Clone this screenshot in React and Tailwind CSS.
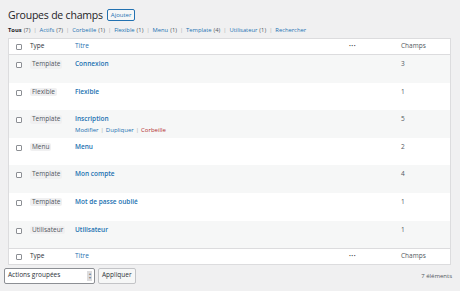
import React from 'react';

const rows = [
  { type: 'Template', title: 'Connexion', count: 3 },
  { type: 'Flexible', title: 'Flexible', count: 1 },
  { type: 'Template', title: 'Inscription', count: 5, actions: true },
  { type: 'Menu', title: 'Menu', count: 2 },
  { type: 'Template', title: 'Mon compte', count: 4 },
  { type: 'Template', title: 'Mot de passe oublié', count: 1 },
  { type: 'Utilisateur', title: 'Utilisateur', count: 1 },
];

const filters = [
  ['Actifs', 7],
  ['Corbeille', 1],
  ['Flexible', 1],
  ['Menu', 1],
  ['Template', 4],
  ['Utilisateur', 1],
];

const Check = () => (
  <span className="block w-[6px] h-[6px] border border-[#8c8f94] bg-white rounded-[1px]" />
);

const HeadRow = ({ top }) => (
  <div className={`flex items-center h-[16px] ${top ? 'border-b' : 'border-t'} border-[#dcdcde] bg-white`}>
    <div className="w-[21px] flex pl-[7px]"><Check /></div>
    <div className="w-[45px] text-[#2c3338]">Type</div>
    <div className="flex-1 text-[#2271b1]">Titre</div>
    <div className="w-[52px] text-[#1d2327] font-bold tracking-[0.5px]">···</div>
    <div className="w-[49px] text-[#50575e]">Champs</div>
  </div>
);

export default function App() {
  return (
    <div className="w-[460px] h-[291px] bg-[#f0f0f1] text-[6.5px] leading-none overflow-hidden" style={{ fontFamily: '"Open Sans", "Noto Sans", sans-serif' }}>
      <div className="flex items-center gap-[4px] pl-[8px] pt-[6px] h-[24px]">
        <h1 className="text-[10.5px] tracking-[-0.2px] text-[#1d2327] font-normal">Groupes de champs</h1>
        <span className="px-[3px] h-[12px] flex items-center border border-[#2271b1] rounded-[2px] text-[#2271b1] bg-[#f6f7f7] text-[6px]">Ajouter</span>
      </div>
      <div className="flex items-center pl-[8px] pt-[2px] h-[12px] text-[5.8px] text-[#50575e]">
        <span className="font-bold text-[#1d2327]">Tous</span>
        <span className="ml-[2px]">(7)</span>
        {filters.map(([n, c]) => (
          <React.Fragment key={n}>
            <span className="mx-[3px] text-[#a7aaad]">|</span>
            <span className="text-[#2271b1]">{n}</span>
            <span className="ml-[2px]">({c})</span>
          </React.Fragment>
        ))}
        <span className="mx-[3px] text-[#a7aaad]">|</span>
        <span className="text-[#2271b1]">Rechercher</span>
      </div>
      <div className="mx-[8px] mt-[2px] w-[443px] border border-[#dcdcde] bg-white">
        <HeadRow top />
        {rows.map((r, i) => (
          <div key={r.title} className={`flex items-start h-[27.6px] pt-[6px] ${i % 2 === 0 ? 'bg-[#f6f7f7]' : 'bg-white'}`}>
            <div className="w-[21px] flex pl-[7px] pt-[1px]"><Check /></div>
            <div className="w-[45px]">
              <span className="inline-block px-[2px] py-[1px] -mt-[1px] bg-[#f0f0f1] rounded-[2px] text-[#50575e]">{r.type}</span>
            </div>
            <div className="flex-1">
              <div className="text-[#2271b1] font-semibold">{r.title}</div>
              {r.actions && (
                <div className="mt-[4px] text-[6px] flex items-center">
                  <span className="text-[#2271b1]">Modifier</span>
                  <span className="mx-[2px] text-[#a7aaad]">|</span>
                  <span className="text-[#2271b1]">Dupliquer</span>
                  <span className="mx-[2px] text-[#a7aaad]">|</span>
                  <span className="text-[#b32d2e]">Corbeille</span>
                </div>
              )}
            </div>
            <div className="w-[52px]" />
            <div className="w-[49px] text-[#50575e]">{r.count}</div>
          </div>
        ))}
        <HeadRow />
      </div>
      <div className="flex items-center justify-between pl-[4px] pr-[8px] mt-[2px] h-[17px]">
        <div className="flex items-center gap-[3px]">
          <div className="w-[91px] h-[16px] flex items-center justify-between border border-[#8c8f94] rounded-[2px] bg-white pl-[3px] pr-[2px] text-[#2c3338]">
            <span>Actions groupées</span>
            <span className="w-[5px] h-[10px] bg-[#dcdcde] flex flex-col items-center justify-center text-[4px] text-[#787c82] leading-none">
              <span>▴</span><span>▾</span>
            </span>
          </div>
          <span className="h-[16px] px-[3px] flex items-center border border-[#c3c4c7] rounded-[2px] bg-[#f6f7f7] text-[#2c3338]">Appliquer</span>
        </div>
        <span className="text-[6px] text-[#50575e]">7 éléments</span>
      </div>
    </div>
  );
}
